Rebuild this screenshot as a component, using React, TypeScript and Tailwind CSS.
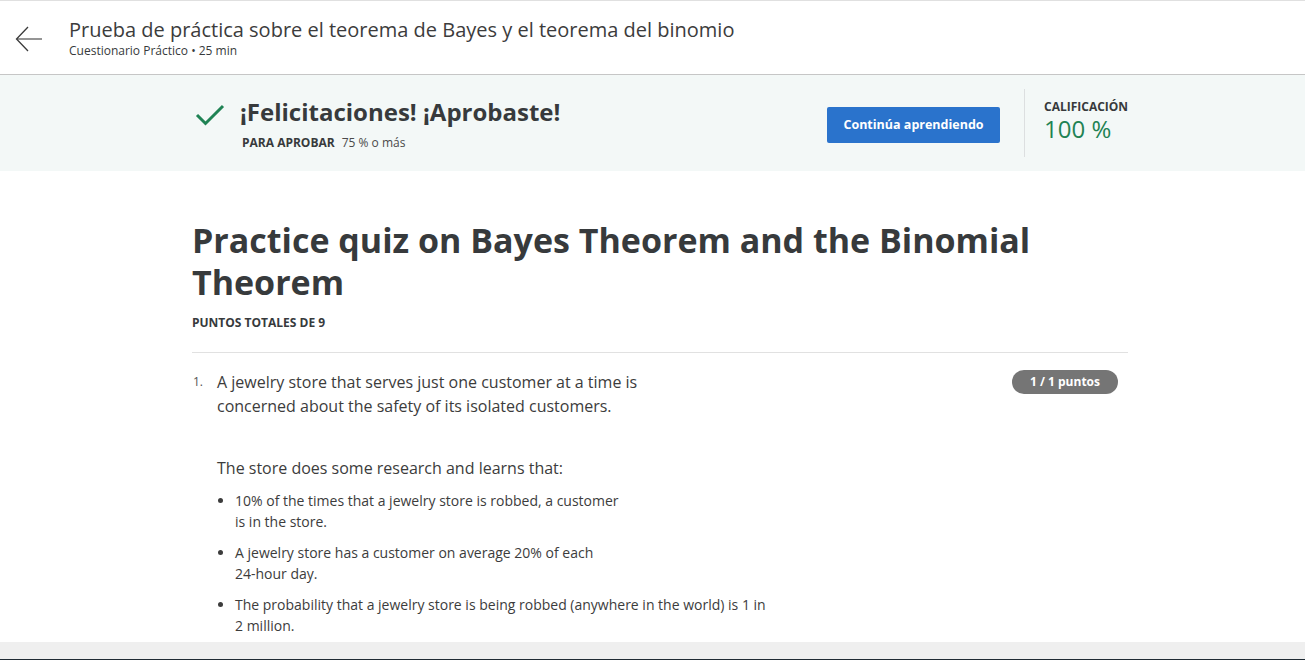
import React from "react";

export default function App() {
  return (
    <div
      className="flex h-[660px] w-[1305px] flex-col overflow-hidden bg-white text-[#373a3c]"
      style={{ fontFamily: '"Open Sans", "Noto Sans", sans-serif' }}
    >
      {/* header */}
      <div className="h-[2px] shrink-0 border-t border-[#e0e0e0] bg-white" />
      <header className="flex h-[73px] shrink-0 items-start border-b border-[#c6c6c6] bg-white">
        <div className="flex w-[69px] shrink-0 justify-center pt-[24px] pr-[12px]">
          <svg width="28" height="26" viewBox="0 0 28 26" fill="none">
            <path d="M27 13H2" stroke="#7a7a7a" strokeWidth="1.6" />
            <path d="M13 1L1.5 13L13 25" stroke="#3a3a3a" strokeWidth="1.3" />
          </svg>
        </div>
        <div className="pt-[14px]">
          <div className="text-[20px] leading-[28px] text-[#3c3c3c]">
            Prueba de práctica sobre el teorema de Bayes y el teorema del binomio
          </div>
          <div className="mt-[-1px] text-[12px] leading-[15px] text-[#373a3c]">
            Cuestionario Práctico • 25 min
          </div>
        </div>
      </header>

      {/* banner */}
      <div className="h-[96px] shrink-0 bg-[#f3f8f7]">
        <div className="ml-[192px] flex h-full w-[936px] items-center">
          <div className="flex flex-1 items-start">
            <svg width="30" height="22" viewBox="0 0 30 22" fill="none" className="ml-[3px] mt-[9px]">
              <path d="M2 11L10.5 19.5L28 2" stroke="#1f8354" strokeWidth="3" />
            </svg>
            <div className="ml-[15px]">
              <div className="text-[24px] font-bold leading-[34px] text-[#373a3c]">
                ¡Felicitaciones! ¡Aprobaste!
              </div>
              <div className="ml-[2px] mt-[6px] flex items-center text-[12px] leading-[16px]">
                <span className="font-bold text-[#373a3c]">PARA APROBAR</span>
                <span className="ml-[7px] text-[12px] text-[#4a4a4a]">75 % o más</span>
              </div>
            </div>
          </div>
          <button className="mt-[4px] flex h-[36px] w-[173px] items-center justify-center rounded-[2px] bg-[#2a73cc] text-[12.5px] font-bold text-white">
            Continúa aprendiendo
          </button>
          <div className="ml-[24px] h-[68px] w-px bg-[#dcdfe0]" />
          <div className="ml-[19px] w-[84px] pb-[5px]">
            <div className="whitespace-nowrap text-[12px] font-bold leading-[14px] text-[#373a3c]">CALIFICACIÓN</div>
            <div className="mt-[2px] whitespace-nowrap text-[24px] leading-[26px] text-[#1f8354]">100 %</div>
          </div>
        </div>
      </div>

      {/* main */}
      <main className="flex-1 overflow-hidden">
        <div className="ml-[192px] w-[936px] pt-[48px]">
          <h1 className="text-[34px] font-bold leading-[42px] text-[#373a3c]">
            Practice quiz on Bayes Theorem and the Binomial
            <br />
            Theorem
          </h1>
          <div className="mt-[12px] text-[12px] font-bold leading-[16px] text-[#373a3c]">
            PUNTOS TOTALES DE 9
          </div>
          <div className="mt-[21px] h-px w-full bg-[#e1e1e1]" />
          <div className="mt-[17px] flex items-start">
            <div className="w-[25px] shrink-0 pl-[1px] pt-[2px] text-[12px] leading-[20px] text-[#555]">1.</div>
            <div className="flex-1 text-[#3c3c3c]">
              <p className="text-[16px] leading-[24px]">
                A jewelry store that serves just one customer at a time is
                <br />
                concerned about the safety of its isolated customers.
              </p>
              <p className="mt-[38px] text-[16px] leading-[24px]">
                The store does some research and learns that:
              </p>
              <ul className="mt-[10px] list-disc pl-[18px] text-[14px] leading-[21px] text-[#3c3c3c] marker:text-[#3c3c3c]">
                <li>
                  10% of the times that a jewelry store is robbed, a customer
                  <br />
                  is in the store.
                </li>
                <li className="mt-[10px]">
                  A jewelry store has a customer on average 20% of each
                  <br />
                  24-hour day.
                </li>
                <li className="mt-[10px]">
                  The probability that a jewelry store is being robbed (anywhere in the world) is 1 in
                  <br />
                  2 million.
                </li>
              </ul>
            </div>
            <div className="mr-[10px] flex h-[24px] w-[106px] shrink-0 items-center justify-center rounded-full bg-[#757575] text-[12px] font-bold text-white">
              1 / 1 puntos
            </div>
          </div>
        </div>
      </main>

      {/* bottom */}
      <div className="h-[17px] shrink-0 bg-[#efefef]" />
      <div className="h-[1px] shrink-0 bg-[#1f2a33]" />
    </div>
  );
}
